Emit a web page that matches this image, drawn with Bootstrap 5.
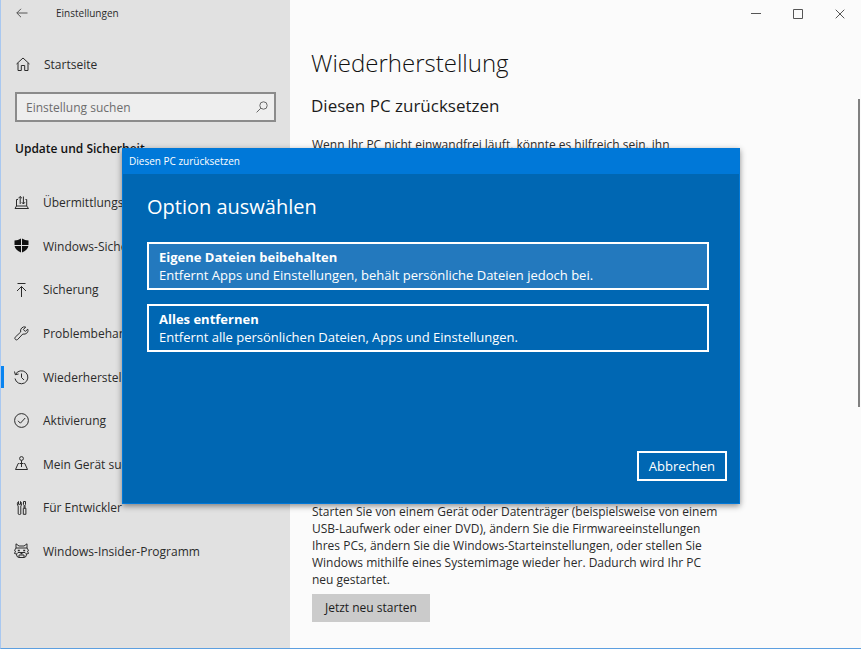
<!DOCTYPE html>
<html lang="de">
<head>
<meta charset="utf-8">
<meta name="viewport" content="width=device-width, initial-scale=1">
<title>Einstellungen</title>
<link href="https://cdn.jsdelivr.net/npm/bootstrap@5.3.0/dist/css/bootstrap.min.css" rel="stylesheet">
<style>
  body { font-family: "Open Sans", "Noto Sans", sans-serif; font-size: 12px; line-height: 17px; color: #2b2b2b; background: #fbfbfb; }
  svg { display: block; fill: none; stroke: currentColor; stroke-width: 1; flex: none; }
  .settings-window { border-left: 1px solid #a9c8f0; border-bottom: 1px solid #5c9fe0; }
  .side-pane { width: 289px; background: #e1e1e1; }
  .bar-top { height: 27px; font-size: 10px; padding-bottom: 1px; }
  .bar-top button { border: 0; background: none; color: #555; padding: 0; }
  .back-btn { width: 42px; }
  .app-name { padding-left: 13px; }
  .win-btn { width: 42px; height: 27px; }
  .side-link { color: #2b2b2b; text-decoration: none; font-size: 12px; gap: 12px; padding-left: 13px; }
  .side-list .side-link { gap: 13px; padding-left: 12px; }
  .side-list .side-link.active { border-left: 3px solid #0a84f0; padding-left: 9px; }
  .side-row { flex: 1 1 0; }
  .home-link { height: 34px; margin-top: 20px; }
  .search-box { margin: 11px 14px 0; border: 2px solid #8b8b8b; background: #eee; height: 30px; }
  .search-box input { border: 0; background: none; outline: 0; font-size: 12px; color: #333; padding: 0 9px; min-width: 0; }
  .search-box input::placeholder { color: #6d6d6d; opacity: 1; }
  .search-box button { border: 0; background: none; color: #666; padding: 0 6px; }
  .side-title { font-size: 12px; font-weight: 600; color: #111; margin: 17px 14px 0; line-height: 20px; }
  .side-list { margin-top: 22px; height: 392px; }
  .mark-bar { height: 22px; }
  .content-pane { padding: 0 22px 0 21px; }
  .page-title { font-size: 24px; line-height: 34px; font-weight: 300; color: #111; margin: 19px 0 0; }
  .section-title { font-size: 17px; line-height: 24px; font-weight: 400; color: #1c1c1c; margin: 14px 0 18px; }
  .text-block { max-width: 412px; padding-left: 1px; }
  .reset-section { min-height: 409px; }
  .restart-btn { background: #cbcbcb; border: 0; border-radius: 0; color: #1c1c1c; font-size: 12px; line-height: 18px; padding: 5px 13px; margin: 6px 0 0 1px; }
  .scroll-thumb { width: 2px; height: 308px; margin: 72px 1px 0 0; background: #808080; }
  .dialog-layer { position: absolute; inset: 0; padding-top: 3px; }
  .reset-dialog { width: 618px; min-height: 356px; background: #0067b3; color: #fff; border: 1px solid #0078d8; border-top: 0; box-shadow: 0 2px 6px rgba(0,0,0,.45); }
  .dialog-bar { background: #0078d8; height: 26px; line-height: 26px; font-size: 10px; padding: 0 6px; }
  .dialog-body { padding: 18px 12px 22px 24px; }
  .dialog-title { font-size: 20px; line-height: 30px; font-weight: 400; margin: 0 0 20px; }
  .choice-list { gap: 14px; margin-right: 18px; }
  .choice { border: 2px solid #fff; background: none; color: #fff; font-size: 13px; line-height: 18px; padding: 4px 10px; }
  .choice.selected { background: #2379be; }
  .cancel-btn { border: 2px solid #fff; background: none; color: #fff; font-size: 13px; line-height: 18px; padding: 4px 10px; }
</style>
<script src="https://cdn.jsdelivr.net/npm/bootstrap@5.3.0/dist/js/bootstrap.bundle.min.js"></script>
</head>
<body>
<div class="settings-window position-relative d-flex min-vh-100">
  <nav class="side-pane flex-shrink-0">
    <div class="bar-top d-flex align-items-center">
      <button type="button" class="back-btn d-flex justify-content-center" aria-label="Zurück"><svg width="12" height="10" viewBox="0 0 12 10"><path d="M.8 5H11.500M5 .8.8 5 5 9.200"/></svg></button>
      <span class="app-name">Einstellungen</span>
    </div>
    <a href="#" class="side-link home-link d-flex align-items-center"><svg width="18" height="16" viewBox="0 0 18 16"><path d="M2.500 8 9 2l6.500 6M4 7v7.500h3.300V9.500h3.400v5H14V7"/></svg>Startseite</a>
    <div class="search-box d-flex align-items-center">
      <input type="search" class="flex-grow-1" placeholder="Einstellung suchen" aria-label="Einstellung suchen">
      <button type="button" aria-label="Suchen"><svg width="12" height="12" viewBox="0 0 12 12"><circle cx="7.500" cy="4.500" r="3.700"/><path d="M4.800 7.200.6 11.400"/></svg></button>
    </div>
    <h2 class="side-title">Update und Sicherheit</h2>
    <div class="side-list d-flex flex-column">
      <a href="#" class="side-link side-row d-flex align-items-center"><svg width="17" height="16" viewBox="0 0 17 16"><path d="M5 4.500H3.500V11M12.500 4.500h1.200V11M3.500 11 2 13.500h13.500L13.700 11zM7.200 9V1.500M5.400 3.300l1.800-1.800L9 3.300M10.400 1.500V9M8.800 7.200l1.600 1.800L12 7.200"/></svg>Übermittlungs</a>
      <a href="#" class="side-link side-row d-flex align-items-center"><svg width="17" height="16" viewBox="0 0 17 16"><path fill="#111" stroke="none" d="M8 .5v6.500H1.500V2.500C4 2.500 6 1.800 8 .5zM9 .5c2 1.300 4 2 6.500 2v4.500H9zM1.600 8H8V14.500C4.500 13 2 11 1.600 8zM9 8h6.400C15 11 12.500 13 9 14.500z"/></svg>Windows-Sicherheit</a>
      <a href="#" class="side-link side-row d-flex align-items-center"><svg width="17" height="16" viewBox="0 0 17 16"><path d="M4.500 1.500h8M8.500 15V4.500M4 9l4.500-4.500L13 9"/></svg>Sicherung</a>
      <a href="#" class="side-link side-row d-flex align-items-center"><svg width="17" height="16" viewBox="0 0 17 16"><path d="M14.800 4.200 12.300 6.400 10.300 4.600 12.700 2A4 4 0 0 0 7.700 7L2.200 12.200C1 13.800 3 15.800 4.600 14.500L9.800 9C13 9.800 15.800 7.200 14.800 4.200z"/></svg>Problembehandlung</a>
      <div class="side-row d-flex align-items-center"><a href="#" aria-current="page" class="side-link active mark-bar d-flex align-items-center"><svg width="17" height="16" viewBox="0 0 17 16"><path d="M2.500 5.500A6.500 6.500 0 1 1 2 9.500M1.500 2.500 2.300 5.700 5.600 5M8.500 4.500V8.500L11 11"/></svg>Wiederherstellung</a></div>
      <a href="#" class="side-link side-row d-flex align-items-center"><svg width="17" height="16" viewBox="0 0 17 16"><circle cx="8.500" cy="7.500" r="6.900"/><path d="M5 7.800 7.400 10.200 12.200 5"/></svg>Aktivierung</a>
      <a href="#" class="side-link side-row d-flex align-items-center"><svg width="17" height="16" viewBox="0 0 17 16"><circle cx="8.500" cy="2.500" r="1.900"/><path d="M8.500 4.500v6.500M6 7.500h-.8L2.500 13.500h12L11.800 7.500H11M6.500 7.500h4"/></svg>Mein Gerät suchen</a>
      <a href="#" class="side-link side-row d-flex align-items-center"><svg width="17" height="16" viewBox="0 0 17 16"><path d="M5.500 1.500v2.800h2V1.500C9 2.500 9 5 7.800 6v8c0 .7-2.600.7-2.600 0V6C4 5 4 2.500 5.500 1.500zM10.500 1.500h2v3l-.5.700v3M10.500 1.500v3l.6.700v3M10.300 8.300h2.600v6h-2.600z"/></svg>Für Entwickler</a>
      <a href="#" class="side-link side-row d-flex align-items-center"><svg width="17" height="16" viewBox="0 0 17 16"><path d="M3 5V.8L6 3h5l3-2.200V5M3 5h11M3 5 1.500 7.500l1 .5L1.500 10.500l2 .5.500 2.500L6 14.500h5l2-1 .5-2.500 2-.5-1-2.500 1-.5L14 5M3.500 11 5 9.500h7l1.500 1.500M6 14.500v-2.500h5V14.500"/><path stroke-width="1.600" d="M4.800 7.500h2M10.200 7.500h2M7.500 10.500h2"/></svg>Windows-Insider-Programm</a>
    </div>
  </nav>
  <div class="flex-grow-1 d-flex flex-column">
    <div class="bar-top d-flex justify-content-end">
      <button type="button" class="win-btn d-flex align-items-center justify-content-center" aria-label="Minimieren"><svg width="10" height="10" viewBox="0 0 10 10"><path d="M0 4.500h10"/></svg></button>
      <button type="button" class="win-btn d-flex align-items-center justify-content-center" aria-label="Maximieren"><svg width="10" height="10" viewBox="0 0 10 10"><path d="M.5.500h9v9h-9z"/></svg></button>
      <button type="button" class="win-btn d-flex align-items-center justify-content-center" aria-label="Schließen"><svg width="10" height="10" viewBox="0 0 10 10"><path d="m.7.700 8.600 8.600M9.300.7.700 9.300"/></svg></button>
    </div>
    <div class="d-flex">
      <main class="content-pane flex-grow-1">
        <h1 class="page-title">Wiederherstellung</h1>
        <section class="reset-section">
          <h2 class="section-title">Diesen PC zurücksetzen</h2>
          <p class="text-block mb-0">Wenn Ihr PC nicht einwandfrei läuft, könnte es hilfreich sein, ihn</p>
        </section>
        <section>
          <p class="text-block mb-0">Starten Sie von einem Gerät oder Datenträger (beispielsweise von einem USB-Laufwerk oder einer DVD), ändern Sie die Firmwareeinstellungen Ihres PCs, ändern Sie die Windows-Starteinstellungen, oder stellen Sie Windows mithilfe eines Systemimage wieder her. Dadurch wird Ihr PC neu gestartet.</p>
          <button type="button" class="restart-btn btn">Jetzt neu starten</button>
        </section>
      </main>
      <div class="scroll-thumb flex-shrink-0"></div>
    </div>
  </div>
  <div class="dialog-layer d-flex align-items-center justify-content-center">
    <div class="reset-dialog d-flex flex-column" role="dialog" aria-modal="true" aria-labelledby="dlg-name">
      <div class="dialog-bar" id="dlg-name">Diesen PC zurücksetzen</div>
      <div class="dialog-body flex-grow-1 d-flex flex-column">
        <h2 class="dialog-title">Option auswählen</h2>
        <div class="choice-list d-flex flex-column">
          <button type="button" class="choice selected text-start"><strong class="d-block">Eigene Dateien beibehalten</strong>Entfernt Apps und Einstellungen, behält persönliche Dateien jedoch bei.</button>
          <button type="button" class="choice text-start"><strong class="d-block">Alles entfernen</strong>Entfernt alle persönlichen Dateien, Apps und Einstellungen.</button>
        </div>
        <button type="button" class="cancel-btn mt-auto align-self-end">Abbrechen</button>
      </div>
    </div>
  </div>
</div>
</body>
</html>
